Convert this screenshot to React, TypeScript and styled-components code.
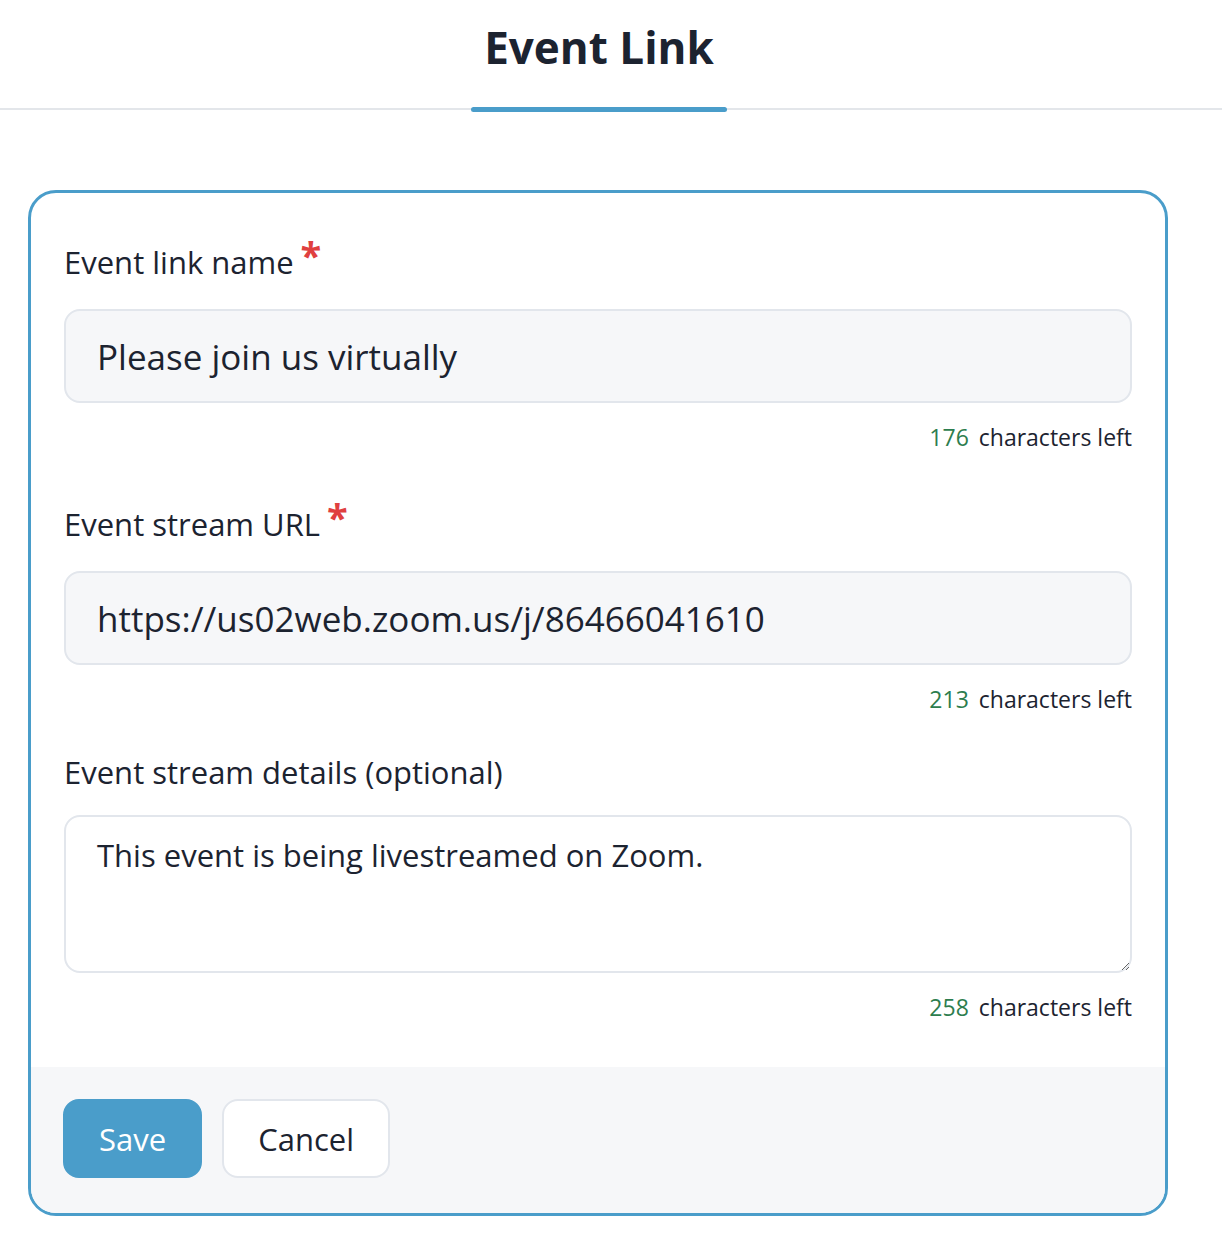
import { useState } from "react";
import styled, { createGlobalStyle } from "styled-components";

const GlobalStyle = createGlobalStyle`
  body {
    margin: 0;
    background: #ffffff;
    font-family: "Open Sans", "Noto Sans", sans-serif;
    color: #1c2330;
  }
  * { box-sizing: border-box; }
`;

const Header = styled.div`
  display: flex;
  justify-content: center;
  height: 110px;
  border-bottom: 2px solid #e3e6ea;
`;

const Tab = styled.div`
  display: flex;
  flex-direction: column;
  align-items: center;
  justify-content: flex-end;
  width: 256px;
  margin-left: -24px;
  margin-bottom: -4px;
`;

const TabTitle = styled.h1`
  margin: 0 0 33px;
  font-size: 44px;
  font-weight: 700;
  line-height: 1.2;
  color: #1c2330;
`;

const TabUnderline = styled.div`
  width: 100%;
  height: 5px;
  border-radius: 3px;
  background: #4a9dca;
`;

const Page = styled.div`
  padding: 80px 54px 20px 28px;
`;

const Card = styled.div`
  border: 3px solid #4a9dca;
  border-radius: 28px;
  overflow: hidden;
  background: #ffffff;
`;

const CardBody = styled.div`
  padding: 35px 33px 44px;
  display: flex;
  flex-direction: column;
  gap: 37px;
`;

const Field = styled.div`
  display: flex;
  flex-direction: column;
`;

const Label = styled.label<{ $required?: boolean }>`
  padding-top: ${(p) => (p.$required ? "14px" : "0")};
  margin-bottom: ${(p) => (p.$required ? "27px" : "23px")};
  font-size: 31px;
  line-height: 40px;
  color: #1c2330;
`;

const Required = styled.span`
  color: #e0403f;
  font-size: 38px;
  font-weight: 700;
  line-height: 0;
  position: relative;
  top: -4px;
  margin-left: 7px;
`;

const TextInput = styled.input`
  width: 100%;
  height: 94px;
  padding: 0 31px;
  border: 2px solid #e2e6ec;
  border-radius: 16px;
  background: #f6f7f9;
  font-family: inherit;
  font-size: 35px;
  color: #1c2330;
  outline: none;
`;

const TextArea = styled.textarea`
  width: 100%;
  height: 158px;
  padding: 18px 31px;
  border: 2px solid #e2e6ec;
  border-radius: 16px;
  background: #ffffff;
  font-family: inherit;
  font-size: 31px;
  line-height: 40px;
  color: #1c2330;
  outline: none;
  resize: vertical;
`;

const Counter = styled.div`
  align-self: flex-end;
  margin-top: 18px;
  font-size: 23px;
  line-height: 32px;
  color: #1c2330;
`;

const CountNumber = styled.span`
  color: #2d7d4e;
  margin-right: 10px;
`;

const Footer = styled.div`
  display: flex;
  gap: 20px;
  padding: 32px 32px 35px;
  background: #f6f7f9;
`;

const Button = styled.button<{ $primary?: boolean }>`
  height: 79px;
  padding: 0 34px;
  border-radius: 16px;
  border: 2px solid ${(p) => (p.$primary ? "#4a9dca" : "#e2e6ec")};
  background: ${(p) => (p.$primary ? "#4a9dca" : "#ffffff")};
  color: ${(p) => (p.$primary ? "#ffffff" : "#1c2330")};
  font-family: inherit;
  font-size: 31px;
  cursor: pointer;
`;

const App = () => {
  const [name, setName] = useState("Please join us virtually");
  const [url, setUrl] = useState("https://us02web.zoom.us/j/86466041610");
  const [details, setDetails] = useState(
    "This event is being livestreamed on Zoom."
  );

  return (
    <>
      <GlobalStyle />
      <Header>
        <Tab>
          <TabTitle>Event Link</TabTitle>
          <TabUnderline />
        </Tab>
      </Header>
      <Page>
        <Card>
          <CardBody>
            <Field>
              <Label $required>
                Event link name<Required>*</Required>
              </Label>
              <TextInput value={name} onChange={(e) => setName(e.target.value)} />
              <Counter>
                <CountNumber>{200 - name.length}</CountNumber>characters left
              </Counter>
            </Field>
            <Field>
              <Label $required>
                Event stream URL<Required>*</Required>
              </Label>
              <TextInput value={url} onChange={(e) => setUrl(e.target.value)} />
              <Counter>
                <CountNumber>{250 - url.length}</CountNumber>characters left
              </Counter>
            </Field>
            <Field>
              <Label>Event stream details (optional)</Label>
              <TextArea
                value={details}
                onChange={(e) => setDetails(e.target.value)}
              />
              <Counter>
                <CountNumber>{299 - details.length}</CountNumber>characters left
              </Counter>
            </Field>
          </CardBody>
          <Footer>
            <Button $primary>Save</Button>
            <Button>Cancel</Button>
          </Footer>
        </Card>
      </Page>
    </>
  );
};

export default App;
